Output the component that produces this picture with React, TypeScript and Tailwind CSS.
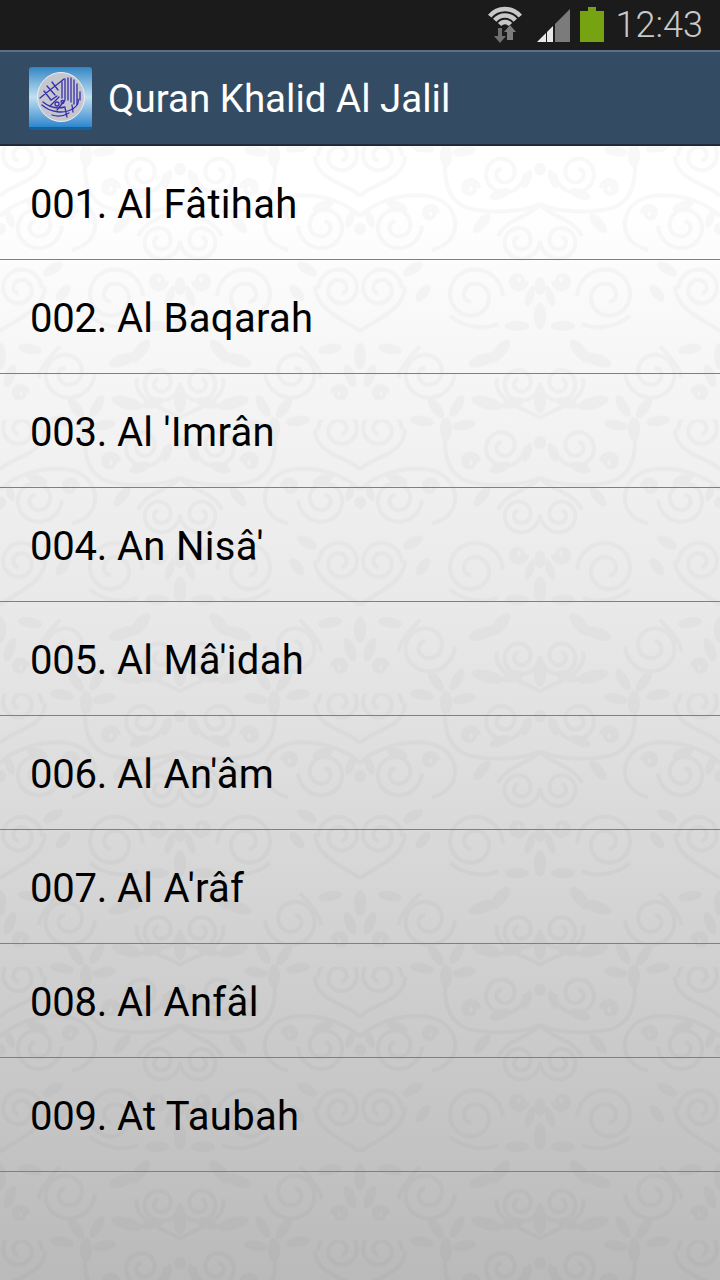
const rows = [
  ["001.", "Al Fâtihah"],
  ["002.", "Al Baqarah"],
  ["003.", "Al 'Imrân"],
  ["004.", "An Nisâ'"],
  ["005.", "Al Mâ'idah"],
  ["006.", "Al An'âm"],
  ["007.", "Al A'râf"],
  ["008.", "Al Anfâl"],
  ["009.", "At Taubah"],
];

// [x, y, outer radius, direction]
const spirals = [
  [143, 27, 22, 1],
  [110, 42, 9, -1],
  [160, 95, 20, 1],
  [158, 135, 9, 1],
  [113, 150, 30, -1],
  [160, 237, 20, 1],
  [20, 10, 22, -1],
  [37, 80, 25, 1],
  [70, 67, 8, -1],
  [20, 143, 22, -1],
  [67, 227, 28, 1],
  [20, 247, 8, -1],
];

// [x, y, rx, ry, rotation]
const leaves = [
  [140, 48, 11, 5, -20],
  [167, 33, 10, 4, -70],
  [122, 77, 12, 5, -50],
  [37, 60, 11, 5, 20],
  [10, 73, 9, 4, 70],
  [180, 170, 6, 13, 0],
  [170, 150, 4, 11, 20],
  [180, 140, 5, 9, 0],
  [157, 180, 12, 5, 0],
  [53, 123, 11, 5, -30],
  [63, 147, 10, 5, -50],
  [30, 203, 12, 5, 10],
  [0, 210, 6, 13, 0],
  [10, 230, 5, 12, 20],
  [140, 205, 14, 6, -50],
  [122, 214, 14, 6, -20],
  [127, 257, 16, 6, 15],
  [153, 257, 12, 5, -15],
  [180, 253, 6, 14, 0],
  [97, 260, 5, 12, 30],
  [76, 262, 5, 12, -35],
  [62, 275, 12, 5, 10],
  [104, 279, 12, 5, -10],
  [86, 283, 6, 12, 0],
];

const stems = [
  "M180 58C165 66 130 68 108 62C90 56 84 38 85 16",
  "M180 58C172 70 146 72 138 90",
  "M0 70C20 50 70 40 88 60C102 78 95 98 72 104",
  "M0 185C12 175 45 165 45 140",
  "M0 50C10 38 45 35 45 10",
  "M180 272C165 262 132 255 137 232",
  "M138 178C125 184 105 182 90 170",
  "M60 200C50 210 38 225 39 232",
];

function spiralPath(x: number, y: number, r: number, dir: number) {
  const pts: string[] = [];
  for (let i = 0; i <= 60; i++) {
    const t = i / 60;
    const a = dir * t * Math.PI * 3.4;
    const rad = r * (1 - t * 0.8);
    pts.push(`${(x + Math.cos(a) * rad).toFixed(1)} ${(y + Math.sin(a) * rad).toFixed(1)}`);
  }
  return "M" + pts.join("L");
}

function Motif() {
  return (
    <g>
      {spirals.map(([x, y, r, d]) => (
        <path key={`${x}-${y}`} d={spiralPath(x, y, r, d)} fill="none" stroke="#000" strokeWidth="4" />
      ))}
      {stems.map((d) => (
        <path key={d} d={d} fill="none" stroke="#000" strokeWidth="4" />
      ))}
      {leaves.map(([x, y, rx, ry, rot]) => (
        <ellipse key={`${x}-${y}`} cx={x} cy={y} rx={rx} ry={ry} transform={`rotate(${rot} ${x} ${y})`} fill="#000" />
      ))}
      <circle cx="180" cy="23" r="6" fill="#000" />
      <circle cx="0" cy="83" r="6" fill="#000" />
    </g>
  );
}

function Damask() {
  return (
    <svg className="absolute inset-0 h-full w-full" aria-hidden="true">
      <defs>
        <pattern id="damask" x="0" y="0" width="360" height="273.6" patternUnits="userSpaceOnUse">
          <g opacity="0.026">
            <g>
              <Motif />
              <g transform="translate(0 -273.6)">
                <Motif />
              </g>
            </g>
            <g transform="matrix(-1 0 0 1 360 0)">
              <Motif />
              <g transform="translate(0 -273.6)">
                <Motif />
              </g>
            </g>
            <g transform="matrix(-1 0 0 1 0 0)">
              <Motif />
            </g>
            <g transform="matrix(-1 0 0 1 720 0)">
              <Motif />
            </g>
          </g>
        </pattern>
      </defs>
      <rect width="100%" height="100%" fill="url(#damask)" />
    </svg>
  );
}

function StatusBar() {
  return (
    <div className="flex h-[50px] items-center justify-end bg-[#1b1b1b] pr-[17px]">
      <svg width="36" height="38" viewBox="0 0 36 38" className="mr-[14px] mt-[-3px]">
        <g fill="none" stroke="#c8c8c8" strokeWidth="4.500">
          <path d="M2.700 11.100A20 20 0 0 1 33.300 11.100" />
          <path d="M7.700 15.300A13.500 13.500 0 0 1 28.300 15.300" />
          <path d="M12.600 19.500A7 7 0 0 1 23.400 19.500" />
        </g>
        <path d="M11 23v8h-4l6 7 6-7h-4v-8z" fill="#6f6f6f" />
        <path d="M20 35v-8h-3l6-7 6 7h-3v8z" fill="#7c7c7c" />
      </svg>
      <svg width="33" height="33" viewBox="0 0 33 33" className="mr-[10px] mt-[1px]">
        <path d="M0 33L9 24V33Z" fill="#e8e8e8" />
        <path d="M10 33V23L16 17V33Z" fill="#e8e8e8" />
        <path d="M18 33V15L33 0V33Z" fill="#7b7b7b" />
      </svg>
      <div className="mr-[12px] mt-[-1px] flex w-[24px] flex-col items-center">
        <div className="h-[4px] w-[8px] bg-[#76a312]" />
        <div className="h-[31px] w-[24px] bg-[#76a312]" />
      </div>
      <span className="font-['Roboto',sans-serif] text-[36px] font-light leading-none text-[#c9c9c9]">12:43</span>
    </div>
  );
}

function AppIcon() {
  return (
    <div className="flex h-[63px] w-[63px] items-center justify-center rounded-[3px] border-b-[3px] border-[#17609c] bg-gradient-to-b from-[#2f86c4] via-[#bfe0f2] to-[#2a86cc]">
      <svg width="48" height="50" viewBox="0 0 48 50">
        <ellipse cx="24" cy="25" rx="23.500" ry="24.500" fill="#c6c6ce" stroke="#eeeef2" />
        <g fill="none" stroke="#3430ad" strokeWidth="1.300" strokeLinecap="round">
          <path d="M28 7v20M31 6v22M34 6v24M37 8v24M40 12v20M43 20v8M25 10v16" />
          <path d="M3 26C10 20 18 14 27 7M7 19l7 9 6-4M10 14l8 9M15 10l6 8" />
          <path d="M6 30c6 5 14 7 22 5M5 33c8 7 22 10 32 3 4-3 5-6 4-9" />
          <path d="M22 25l-9 9M28 28l-8 10M15 43c6 2 12 1 17-2M28 36l2 9M35 33l1 7" />
          <path d="M18 32a2 2 0 1 0 4 0 2 2 0 1 0-4 0M24 30a1.500 1.500 0 1 0 3 0 1.500 1.500 0 1 0-3 0" />
        </g>
      </svg>
    </div>
  );
}

function AppBar() {
  return (
    <div className="flex h-[96px] items-center gap-[16px] border-t-2 border-b-2 border-t-[#5a7083] border-b-[#1e2c3a] bg-[#344c63] pl-[29px]">
      <AppIcon />
      <span className="pt-[3px] font-['Roboto',sans-serif] text-[38.5px] leading-none text-white">Quran Khalid Al Jalil</span>
    </div>
  );
}

export default function App() {
  return (
    <div className="flex h-[1280px] w-[720px] flex-col overflow-hidden">
      <StatusBar />
      <AppBar />
      <div className="relative flex-1 bg-gradient-to-b from-[#ffffff] from-5% via-[#e8e8e8] via-42% to-[#bababa]">
        <Damask />
        <div className="relative">
          {rows.map(([num, name]) => (
            <div key={num} className="flex h-[114px] items-center border-b border-[#808080] pl-[30px] pt-[5px]">
              <span className="font-['Roboto',sans-serif] text-[40px] leading-none tracking-[-0.2px] text-black">
                {num} <span className="tracking-[0.3px]">{name}</span>
              </span>
            </div>
          ))}
        </div>
      </div>
    </div>
  );
}
